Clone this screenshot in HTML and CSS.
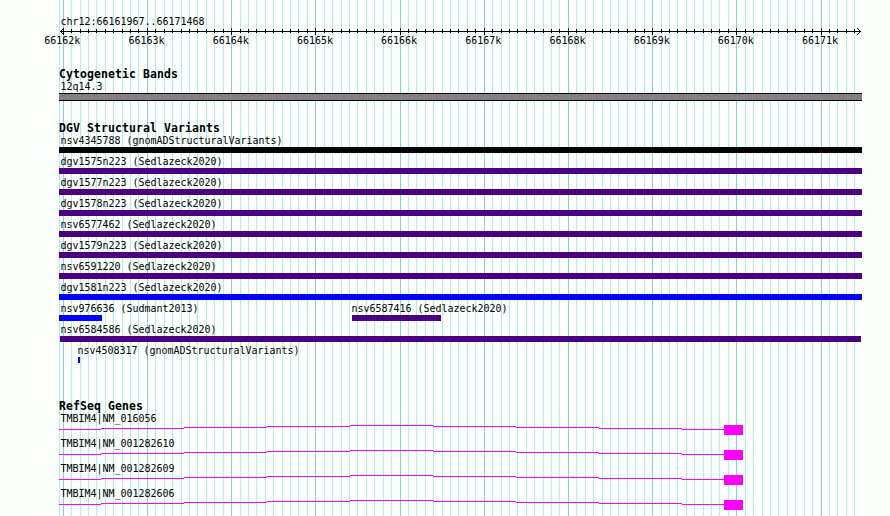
FILE: index.html
```
<!DOCTYPE html>
<html lang="en">
<head>
<meta charset="utf-8">
<title>Genome browser</title>
<link rel="stylesheet" href="styles.css">
</head>
<body>
<svg class="grid" width="890" height="516" shape-rendering="crispEdges" aria-hidden="true">
<path id="minor" class="minor"/><path id="major" class="major"/>
</svg>
<main class="browser">
  <header class="ruler">
    <div class="label">chr12:66161967..66171468</div>
    <svg class="axis" width="802" height="9" shape-rendering="crispEdges" aria-hidden="true">
      <path id="ticks" class="ink"/>
      <path class="ink" d="M1 4h801v1H1zM2 3h1v1h-1zM3 2h1v1h-1zM4 1h1v1h-1zM2 5h1v1h-1zM3 6h1v1h-1zM4 7h1v1h-1zM800 3h1v1h-1zM799 2h1v1h-1zM798 1h1v1h-1zM800 5h1v1h-1zM799 6h1v1h-1zM798 7h1v1h-1z"/>
    </svg>
    <div class="scale label"><span>66162k</span><span>66163k</span><span>66164k</span><span>66165k</span><span>66166k</span><span>66167k</span><span>66168k</span><span>66169k</span><span>66170k</span><span>66171k</span></div>
  </header>
  <section class="bands">
    <h2>Cytogenetic Bands</h2>
    <div class="label">12q14.3</div>
    <div class="band"></div>
  </section>
  <section class="variants">
    <h2>DGV Structural Variants</h2>
    <div class="row"><div class="label">nsv4345788 (gnomADStructuralVariants)</div><div class="bar black"></div></div>
    <div class="row"><div class="label">dgv1575n223 (Sedlazeck2020)</div><div class="bar"></div></div>
    <div class="row"><div class="label">dgv1577n223 (Sedlazeck2020)</div><div class="bar"></div></div>
    <div class="row"><div class="label">dgv1578n223 (Sedlazeck2020)</div><div class="bar"></div></div>
    <div class="row"><div class="label">nsv6577462 (Sedlazeck2020)</div><div class="bar"></div></div>
    <div class="row"><div class="label">dgv1579n223 (Sedlazeck2020)</div><div class="bar"></div></div>
    <div class="row"><div class="label">nsv6591220 (Sedlazeck2020)</div><div class="bar"></div></div>
    <div class="row"><div class="label">dgv1581n223 (Sedlazeck2020)</div><div class="bar blue"></div></div>
    <div class="row pair">
      <div class="first"><div class="label">nsv976636 (Sudmant2013)</div><div class="bar blue sudmant"></div></div>
      <div><div class="label">nsv6587416 (Sedlazeck2020)</div><div class="bar partial"></div></div>
    </div>
    <div class="row"><div class="label">nsv6584586 (Sedlazeck2020)</div><div class="bar inset"></div></div>
    <div class="row shifted"><div class="label">nsv4508317 (gnomADStructuralVariants)</div><div class="bar blue tiny"></div></div>
  </section>
  <section class="genes">
    <h2>RefSeq Genes</h2>
    <div class="gene"><div class="label">TMBIM4|NM_016056</div><svg class="model" width="684" height="10" shape-rendering="crispEdges"><use href="#transcript"/></svg></div>
    <div class="gene"><div class="label">TMBIM4|NM_001282610</div><svg class="model" width="684" height="10" shape-rendering="crispEdges"><use href="#transcript"/></svg></div>
    <div class="gene"><div class="label">TMBIM4|NM_001282609</div><svg class="model" width="684" height="10" shape-rendering="crispEdges"><use href="#transcript"/></svg></div>
    <div class="gene"><div class="label">TMBIM4|NM_001282606</div><svg class="model" width="684" height="10" shape-rendering="crispEdges"><use href="#transcript"/></svg></div>
  </section>
</main>
<svg class="defs" width="0" height="0" aria-hidden="true"><defs>
<path id="transcript" d="M0 4h42v1H0zM42 3h83v1h-83zM125 2h83v1h-83zM208 1h83v1h-83zM291 0h83v1h-83zM374 1h83v1h-83zM457 2h83v1h-83zM540 3h83v1h-83zM623 4h42v1h-42zM665 0h19v10h-19z"/>
</defs></svg>
<script src="grid.js"></script>
</body>
</html>
```
FILE: styles.css
```
* { box-sizing: border-box; }
body { margin: 0; width: 890px; height: 516px; overflow: hidden; background: #fcfffc; color: #000; font-family: "DejaVu Sans Mono", monospace; }
.grid { position: absolute; left: 0; top: 0; z-index: -1; }
.minor { fill: #afeeee; }
.major { fill: #87ceeb; }
.ink { fill: #000; }
.defs { display: block; }
.browser { width: 803px; margin-left: 59px; padding-top: 15px; }
.label { height: 13px; padding-left: 1.4px; font-size: 10px; line-height: 13px; letter-spacing: -0.0205px; white-space: pre; }
h2 { margin: 0; height: 12px; font-size: 11.5px; line-height: 12px; letter-spacing: 0.077px; font-weight: bold; white-space: pre; }
.ruler { height: 53px; }
.axis { display: block; margin-top: -1px; overflow: visible; }
.scale { display: grid; grid-template-columns: repeat(10, 84.2px); margin: -2px 0 0 -14.7px; padding: 0; }
.bands { height: 54px; }
.band { height: 8px; background: #848084; border: solid #000; border-width: 1px 0; }
.variants { height: 278px; }
.row { height: 21px; }
.bar { height: 6px; background: #4b0082; }
.black { background: #000; }
.blue { background: #00f; }
.pair { display: flex; }
.first { width: 291px; }
.sudmant { width: 43px; }
.partial { width: 89px; margin-left: 2px; }
.inset { margin: 0 1px; }
.shifted { padding-left: 17px; }
.tiny { width: 2px; margin-left: 2px; }
.genes { height: 116px; }
.gene { height: 25px; }
.model { display: block; fill: #f0f; }
```
FILE: grid.js
```
// One vertical line per 100 bases, with a darker line at each kilobase.
let minor = "M59 0h1v516h-1z", major = "", ticks = "";
for (let i = 0; i < 95; i++) {
  const x = Math.floor(63.21 + 8.42 * i);
  const line = `M${x} 0h1v516h-1z`;
  if (i % 10 === 0) {
    major += line;
    ticks += `M${x - 59} 1h1v7h-1z`;
  } else {
    minor += line;
    ticks += `M${x - 59} 2h1v4h-1z`;
  }
}
document.getElementById("minor").setAttribute("d", minor);
document.getElementById("major").setAttribute("d", major);
document.getElementById("ticks").setAttribute("d", ticks);
```
